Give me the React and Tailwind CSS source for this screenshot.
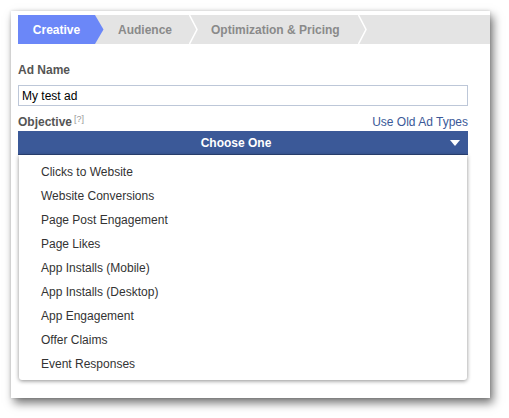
import React from "react";

const objectives = [
  "Clicks to Website",
  "Website Conversions",
  "Page Post Engagement",
  "Page Likes",
  "App Installs (Mobile)",
  "App Installs (Desktop)",
  "App Engagement",
  "Offer Claims",
  "Event Responses",
];

const Chevron = () => (
  <svg width="9" height="29" viewBox="0 0 9 29" className="shrink-0">
    <polyline points="0.5,0 8,14.5 0.5,29" fill="none" stroke="#ffffff" strokeWidth="1.5" />
  </svg>
);

export default function App() {
  return (
    <div
      className="w-[509px] h-[418px] bg-white pt-[11px] pl-[11px]"
      style={{ fontFamily: '"Liberation Sans", Arial, sans-serif' }}
    >
      <div className="relative w-[479px] h-[387px] bg-white pt-[4px] pl-[7px] shadow-[3px_5px_9px_rgba(0,0,0,0.55),0_0_3px_rgba(0,0,0,0.15)]">
        {/* Steps */}
        <div className="flex items-center h-[29px] bg-[#e4e4e4] text-[12px] font-bold">
          <div className="relative flex items-center justify-center w-[77px] h-full bg-[#6b87f8] text-white">
            Creative
            <svg width="9" height="29" viewBox="0 0 9 29" className="absolute left-full top-0">
              <polygon points="0,0 8.5,14.5 0,29" fill="#6b87f8" />
            </svg>
          </div>
          <div className="w-[94px] pl-[23px] text-[#8a8a8a]">Audience</div>
          <Chevron />
          <div className="w-[160px] pl-[13px] text-[#8a8a8a]">Optimization &amp; Pricing</div>
          <Chevron />
        </div>

        {/* Form */}
        <div className="w-[450px]">
          <div className="mt-[18px] h-[16px] leading-[16px] text-[12px] font-bold text-[#555]">Ad Name</div>
          <div className="mt-[7px] h-[21px] border border-[#bdc7d8] pl-[3px] flex items-center text-[12px] text-black">
            My test ad
          </div>
          <div className="mt-[8px] h-[16px] flex items-end justify-between text-[12px]">
            <div className="flex items-start">
              <span className="font-bold text-[#555] leading-[16px]">Objective</span>
              <span className="ml-[2px] text-[9px] leading-[10px] text-[#999]">[?]</span>
            </div>
            <span className="text-[#3b5998] leading-[16px]">Use Old Ad Types</span>
          </div>

          <div className="relative mt-[1px]">
            <div className="relative h-[24px] bg-[#3b5998] border-b border-[#2c4478] flex items-center justify-center pr-[14px] text-[12px] font-bold text-white">
              Choose One
              <svg width="10" height="6" viewBox="0 0 10 6" className="absolute right-[8px] top-[9px]">
                <polygon points="0,0 10,0 5,6" fill="#ffffff" />
              </svg>
            </div>
            <ul className="absolute top-full left-[1px] right-[1px] bg-white rounded-b-[3px] pt-[5px] pb-[4px] shadow-[0_1px_4px_rgba(0,0,0,0.45)]">
              {objectives.map((o) => (
                <li key={o} className="h-[24px] leading-[24px] pl-[22px] text-[12px] text-[#333]">
                  {o}
                </li>
              ))}
            </ul>
          </div>
        </div>
      </div>
    </div>
  );
}
